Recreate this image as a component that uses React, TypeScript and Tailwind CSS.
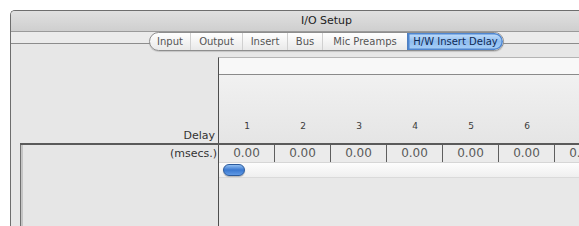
import React from 'react';

const TABS = [
  { label: 'Input', w: 'w-[40px]' },
  { label: 'Output', w: 'w-[52px]' },
  { label: 'Insert', w: 'w-[45px]' },
  { label: 'Bus', w: 'w-[35px]' },
  { label: 'Mic Preamps', w: 'w-[85px]' },
];

const COLS = [1, 2, 3, 4, 5, 6, 7];

export default function App() {
  return (
    <div className="w-[579px] h-[226px] overflow-hidden bg-white pl-[10px] pt-[10px] font-['DejaVu_Sans',sans-serif]">
      {/* Window */}
      <div className="w-[632px] h-[240px] rounded-tl-[5px] border-l border-t border-[#6e6e6e] bg-[#ebebeb] flex flex-col">
        {/* Title bar */}
        <div className="h-[21px] flex items-center justify-center text-[11px] text-[#222] bg-gradient-to-b from-[#e0e0e0] to-[#cfcfcf] border-b border-[#9a9a9a] rounded-tl-[4px]">
          I/O Setup
        </div>

        {/* Tabs straddle the pane border */}
        <div className="relative z-10 -mb-[8px] flex justify-center">
          <div className="flex h-[19px] rounded-full border border-[#8e8e8e] bg-gradient-to-b from-[#ffffff] to-[#e9e9e9] shadow-[0_1px_1px_rgba(0,0,0,0.15)] overflow-hidden text-[10px] text-[#555]">
            {TABS.map((t, i) => (
              <div
                key={t.label}
                className={`${t.w} flex items-center justify-center ${i > 0 ? 'border-l border-[#d0d0d0]' : ''}`}
              >
                {t.label}
              </div>
            ))}
            <div className="w-[96px] flex items-center justify-center rounded-r-full border-l border-[#4f7fc0] bg-gradient-to-b from-[#c9e2fb] via-[#8fbdf0] to-[#a9d0f7] text-[#0e2a55] shadow-[inset_0_0_0_1.5px_#4f86d0]">
              H/W Insert Delay
            </div>
          </div>
        </div>

        {/* Tab pane */}
        <div className="flex-1 border-t border-[#8c8c8c] bg-[#e7e7e7] flex flex-col">
          {/* Header area */}
          <div className="flex h-[99px]">
            <div className="w-[207px] flex flex-col justify-end items-end pr-[3px] pb-[1px]">
              <span className="text-[11px] leading-[13px] text-[#333]">Delay</span>
            </div>
            <div className="flex-1 mt-[13px] border-l border-t border-l-[#4e4e4e] border-t-[#b4b4b4] flex flex-col">
              <div className="h-[17px] bg-[#f8f8f8] border-b border-[#8a8a8a]" />
              <div className="flex-1 bg-gradient-to-b from-[#f1f1f1] to-[#e5e5e5] flex items-end pb-[12px]">
                {COLS.slice(0, 6).map((c) => (
                  <div key={c} className="w-[56px] shrink-0 text-center text-[9px] leading-[10px] text-[#3a3a3a]">
                    {c}
                  </div>
                ))}
              </div>
            </div>
          </div>

          {/* Thick divider */}
          <div className="h-[2px] ml-[9px] bg-[#5a5a5a]" />

          {/* Values area */}
          <div className="flex flex-1">
            <div className="w-[207px] pl-[9px]">
              <div className="h-full border-l border-[#6f6f6f] shadow-[inset_2px_0_0_#c4c4c4] bg-[#e6e6e6] flex justify-end pr-[1px]">
                <span className="text-[11px] leading-[18px] text-[#333]">(msecs.)</span>
              </div>
            </div>
            <div className="flex-1 border-l border-[#4e4e4e] flex flex-col">
              <div className="h-[18px] flex bg-[#ebebeb] border-b border-[#d6d6d6]">
                {COLS.map((c) => (
                  <div
                    key={c}
                    className="w-[56px] shrink-0 border-r border-[#5e5e5e] text-center text-[12px] leading-[17px] text-[#5a5a5a]"
                  >
                    0.00
                  </div>
                ))}
              </div>
              <div className="h-[15px] flex items-center pl-[4px] bg-gradient-to-b from-[#fdfdfd] to-[#efefef] border-b border-[#dadada]">
                <div className="w-[22px] h-[12px] rounded-full border border-[#2b5a9c] bg-gradient-to-b from-[#8fbdf1] via-[#3a78d0] to-[#5f99e4] shadow-[0_1px_1px_rgba(0,0,0,0.25)]" />
              </div>
              <div className="flex-1 bg-[#e8e8e8]" />
            </div>
          </div>
        </div>
      </div>
    </div>
  );
}
